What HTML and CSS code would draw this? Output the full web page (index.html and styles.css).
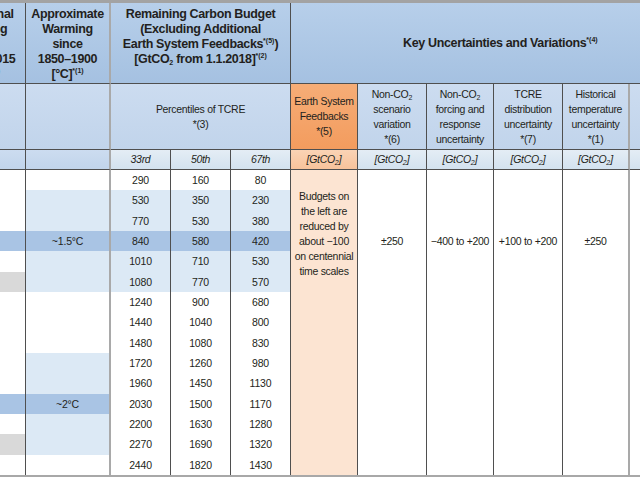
FILE: index.html
```html
<!DOCTYPE html>
<html>
<head>
<meta charset="utf-8">
<link rel="stylesheet" href="styles.css">
</head>
<body>
<div class="page">
  <div class="grid">
    <!-- header row 1 -->
    <div class="cell h1 b hd top center colA">Additional<br>Warming<br>since<br>2006–2015<br>[°C]<span class="sup">*(10)</span></div>
    <div class="cell h1 gr b hd top center">Approximate<br>Warming<br>since<br>1850–1900<br>[°C]<span class="sup">*(1)</span></div>
    <div class="cell h1 b hd top center span3">Remaining Carbon Budget<br>(Excluding Additional<br>Earth System Feedbacks<span class="sup">*(5)</span>)<br>[GtCO<span class="sub">2</span> from 1.1.2018]<span class="sup">*(2)</span></div>
    <div class="cell h1 b hd mid spanKey"><div class="keyText">Key Uncertainties and Variations<span class="sup">*(4)</span></div></div>

    <!-- header row 2 -->
    <div class="cell h2 b"></div>
    <div class="cell h2 gr b"></div>
    <div class="cell h2 b mid span3 small"><div>Percentiles of TCRE<br>*(3)</div></div>
    <div class="cell or1 b mid small"><div>Earth System<br>Feedbacks<br>*(5)</div></div>
    <div class="cell h2 b mid small"><div>Non-CO<span class="sub">2</span><br>scenario<br>variation<br>*(6)</div></div>
    <div class="cell h2 b mid small"><div>Non-CO<span class="sub">2</span><br>forcing and<br>response<br>uncertainty</div></div>
    <div class="cell h2 b mid small"><div>TCRE<br>distribution<br>uncertainty<br>*(7)</div></div>
    <div class="cell h2 gr b mid small"><div>Historical<br>temperature<br>uncertainty<br>*(1)</div></div>
    <div class="cell h2 b"></div>

    <!-- header row 3 -->
    <div class="cell h2 b"></div>
    <div class="cell h2 gr b"></div>
    <div class="cell h3 b mid small it"><div>33rd</div></div>
    <div class="cell h3 b mid small it"><div>50th</div></div>
    <div class="cell h3 b mid small it"><div>67th</div></div>
    <div class="cell or2 b mid small it"><div>[GtCO<span class="sub">2</span>]</div></div>
    <div class="cell h3 b mid small it"><div>[GtCO<span class="sub">2</span>]</div></div>
    <div class="cell h3 b mid small it"><div>[GtCO<span class="sub">2</span>]</div></div>
    <div class="cell h3 b mid small it"><div>[GtCO<span class="sub">2</span>]</div></div>
    <div class="cell h3 gr b mid small it"><div>[GtCO<span class="sub">2</span>]</div></div>
    <div class="cell h3 b"></div>

    <!-- body: right merged columns -->
    <div class="cell or3 rs c6 small center orText">Budgets on<br>the left are<br>reduced by<br>about −100<br>on centennial<br>time scales</div>
    <div class="cell wh rs c7 small center valText">±250</div>
    <div class="cell wh rs c8 small center valText">−400 to +200</div>
    <div class="cell wh rs c9 small center valText">+100 to +200</div>
    <div class="cell wh rs c10 gr small center valText">±250</div>
    <div class="cell wh rs c11"></div>

    <!-- body rows: cols A-E -->
    <div class="cell wh"></div><div class="cell wh gr"></div>
    <div class="cell wh num">290</div><div class="cell wh num">160</div><div class="cell wh num">80</div>

    <div class="cell wh"></div><div class="cell lb gr"></div>
    <div class="cell lb num">530</div><div class="cell lb num">350</div><div class="cell lb num">230</div>

    <div class="cell wh"></div><div class="cell lb gr"></div>
    <div class="cell lb num">770</div><div class="cell lb num">530</div><div class="cell lb num">380</div>

    <div class="cell mb"></div><div class="cell mb gr num">~1.5°C</div>
    <div class="cell mb num">840</div><div class="cell mb num">580</div><div class="cell mb num">420</div>

    <div class="cell wh"></div><div class="cell lb gr"></div>
    <div class="cell lb num">1010</div><div class="cell lb num">710</div><div class="cell lb num">530</div>

    <div class="cell gy"></div><div class="cell lb gr"></div>
    <div class="cell lb num">1080</div><div class="cell lb num">770</div><div class="cell lb num">570</div>

    <div class="cell wh"></div><div class="cell wh gr"></div>
    <div class="cell wh num">1240</div><div class="cell wh num">900</div><div class="cell wh num">680</div>

    <div class="cell wh"></div><div class="cell wh gr"></div>
    <div class="cell wh num">1440</div><div class="cell wh num">1040</div><div class="cell wh num">800</div>

    <div class="cell wh"></div><div class="cell wh gr"></div>
    <div class="cell wh num">1480</div><div class="cell wh num">1080</div><div class="cell wh num">830</div>

    <div class="cell wh"></div><div class="cell lb gr"></div>
    <div class="cell wh num">1720</div><div class="cell wh num">1260</div><div class="cell wh num">980</div>

    <div class="cell wh"></div><div class="cell lb gr"></div>
    <div class="cell wh num">1960</div><div class="cell wh num">1450</div><div class="cell wh num">1130</div>

    <div class="cell mb"></div><div class="cell mb gr num">~2°C</div>
    <div class="cell wh num">2030</div><div class="cell wh num">1500</div><div class="cell wh num">1170</div>

    <div class="cell wh"></div><div class="cell lb gr"></div>
    <div class="cell wh num">2200</div><div class="cell wh num">1630</div><div class="cell wh num">1280</div>

    <div class="cell gy"></div><div class="cell lb gr"></div>
    <div class="cell wh num">2270</div><div class="cell wh num">1690</div><div class="cell wh num">1320</div>

    <div class="cell wh"></div><div class="cell wh gr"></div>
    <div class="cell wh num">2440</div><div class="cell wh num">1820</div><div class="cell wh num">1430</div>
  </div>
</div>
</body>
</html>
```

FILE: styles.css
```css
html, body {
  margin: 0;
  padding: 0;
  background: #ffffff;
}

.page {
  width: 640px;
  height: 480px;
  overflow: hidden;
  background: #ffffff;
}

.grid {
  display: grid;
  margin-left: -44px;
  width: 744px;
  grid-template-columns: 70px 85px 60px 60px 60px 67px 69px 67px 69px 67px 70px;
  grid-template-rows: 81px 66px 20px repeat(15, 20.333px);
  border-top: 3px solid #a3a3a3;
  border-bottom: 2px solid #a8a8a8;
  font-family: "Liberation Sans", Arial, sans-serif;
  color: #231f20;
}

.cell {
  box-sizing: border-box;
  border-right: 1px solid #4f4f4f;
  overflow: hidden;
}

.gr {
  border-right: 2px solid #a9a9a9;
}

.b {
  border-bottom: 1px solid #4f4f4f;
}

.hd {
  font-weight: bold;
  font-size: 12.5px;
  letter-spacing: -0.35px;
  line-height: 15px;
}

.top {
  padding-top: 4px;
}

.colA {
  padding-right: 17px;
  white-space: nowrap;
}

.center {
  text-align: center;
}

.mid {
  display: flex;
  justify-content: center;
  align-items: center;
  text-align: center;
}

.span3 {
  grid-column: span 3;
}

.spanKey {
  grid-column: span 6;
  justify-content: flex-start;
}

.keyText {
  padding-left: 112px;
}

.small {
  font-size: 10.5px;
  letter-spacing: -0.3px;
  line-height: 15px;
}

.it {
  font-style: italic;
}

.sup {
  font-size: 7px;
  vertical-align: 5px;
  line-height: 0;
  letter-spacing: 0;
}

.sub {
  font-size: 7px;
  vertical-align: -2px;
  line-height: 0;
  letter-spacing: 0;
}

.h1 {
  background: linear-gradient(180deg, #b7cfea 0%, #a5c1e1 100%);
}

.h2 {
  background: linear-gradient(180deg, #ccdcf0 0%, #c1d4eb 100%);
}

.h3 {
  background: linear-gradient(180deg, #e4edf5 0%, #d3e2ef 100%);
}

.or1 {
  background: linear-gradient(180deg, #f6ad77 0%, #f39c5e 100%);
}

.or2 {
  background: linear-gradient(180deg, #fad3b5 0%, #f8c39b 100%);
}

.or3 {
  background: #fce4d2;
}

.wh {
  background: #ffffff;
}

.lb {
  background: #dce9f5;
}

.mb {
  background: #a9c4e4;
}

.gy {
  background: #d9d9d9;
}

.num {
  font-size: 10.5px;
  letter-spacing: -0.2px;
  line-height: 20px;
  text-align: center;
}

.rs {
  grid-row: 4 / span 15;
}

.c6 { grid-column: 6; }
.c7 { grid-column: 7; }
.c8 { grid-column: 8; }
.c9 { grid-column: 9; }
.c10 { grid-column: 10; }
.c11 { grid-column: 11; }

.orText {
  padding-top: 19px;
}

.valText {
  padding-top: 64px;
}
```
